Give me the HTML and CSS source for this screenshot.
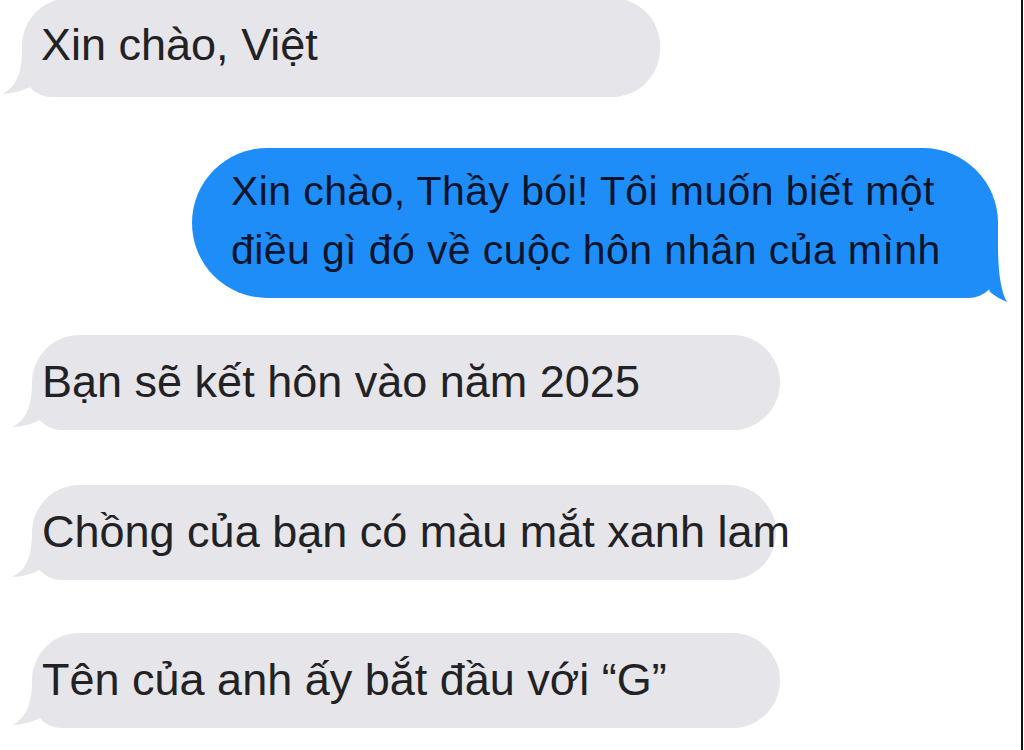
FILE: index.html
```html
<!DOCTYPE html>
<html lang="vi">
<head>
    <meta charset="UTF-8">
    <meta name="viewport" content="width=device-width, initial-scale=1.0">
    <title>Thầy bói</title>
    <link rel="stylesheet" href="styles.css">
</head>
<body>
    <div class="chat">
        <div class="bubble incoming first">
            <span class="text">Xin chào, Việt</span>
            <svg class="tail-in" width="40" height="50" viewBox="0 0 40 50"><path d="M20 3 C20 28 13 41 0 47 C10 47 20 44 28 40 L35 13 Z"/></svg>
        </div>
        <div class="bubble outgoing">
            <span class="text">Xin chào, Thầy bói! Tôi muốn biết một<br>điều gì đó về cuộc hôn nhân của mình</span>
            <svg class="tail-out" width="40" height="60" viewBox="0 0 40 60"><path d="M28 3 C28 30 31 50 37 60 C30 57 25 54 20 50 L10 20 Z"/></svg>
        </div>
        <div class="bubble incoming wide gap-a">
            <span class="text">Bạn sẽ kết hôn vào năm 2025</span>
            <svg class="tail-in" width="40" height="50" viewBox="0 0 40 50"><path d="M20 3 C20 28 13 41 0 47 C10 47 20 44 28 40 L35 13 Z"/></svg>
        </div>
        <div class="bubble incoming wide gap-b narrow">
            <span class="text">Chồng của bạn có màu mắt xanh lam</span>
            <svg class="tail-in" width="40" height="50" viewBox="0 0 40 50"><path d="M20 3 C20 28 13 41 0 47 C10 47 20 44 28 40 L35 13 Z"/></svg>
        </div>
        <div class="bubble incoming wide gap-c">
            <span class="text">Tên của anh ấy bắt đầu với “G”</span>
            <svg class="tail-in" width="40" height="50" viewBox="0 0 40 50"><path d="M20 3 C20 28 13 41 0 47 C10 47 20 44 28 40 L35 13 Z"/></svg>
        </div>
    </div>
</body>
</html>
```

FILE: styles.css
```css
body, html {
    margin: 0;
    padding: 0;
    height: 100%;
    background-color: #fff;
    font-family: "Liberation Sans", Arial, sans-serif;
    overflow: hidden;
}
.chat {
    box-sizing: border-box;
    width: 1023px;
    height: 750px;
    border-right: 2px solid #111;
    display: flex;
    flex-direction: column;
    align-items: flex-start;
}
.bubble {
    position: relative;
    box-sizing: border-box;
    display: flex;
    align-items: center;
    white-space: nowrap;
}
.incoming {
    background-color: #e5e5ea;
    color: #222224;
    font-size: 45px;
    border-radius: 48px 48px 48px 30px;
}
.incoming .text {
    position: relative;
    z-index: 1;
}
.first {
    margin-top: -2px;
    margin-left: 22px;
    width: 638px;
    height: 99px;
    padding: 0 0 6px 19px;
}
.wide {
    margin-left: 32px;
    width: 748px;
    height: 95px;
    padding: 0 0 2px 10px;
}
.narrow {
    width: 744px;
}
.gap-a {
    margin-top: 37px;
}
.gap-b {
    margin-top: 55px;
}
.gap-c {
    margin-top: 53px;
}
.tail-in {
    position: absolute;
    left: -20px;
    bottom: 0;
    fill: #e5e5ea;
}
.outgoing {
    margin-top: 51px;
    margin-left: 192px;
    width: 806px;
    height: 150px;
    padding: 0 0 4px 39px;
    background-color: #1f8df7;
    color: #0a152b;
    font-size: 41px;
    line-height: 59px;
    letter-spacing: 0.4px;
    border-radius: 76px 76px 30px 76px;
}
.tail-out {
    position: absolute;
    right: -12px;
    bottom: -4px;
    fill: #1f8df7;
}
```
